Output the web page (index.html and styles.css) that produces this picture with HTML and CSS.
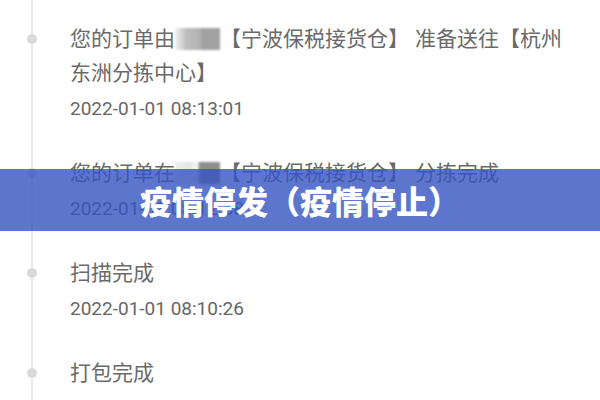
FILE: index.html
```html
<!DOCTYPE html>
<html lang="zh-CN">
<head>
<meta charset="utf-8">
<title>物流详情</title>
<link rel="stylesheet" href="styles.css">
</head>
<body>
<div class="page">
  <ul class="timeline">
    <li class="step">
      <p class="title">您的订单由<span class="mask mask-a"></span>【宁波保税接货仓】<span class="gap"></span>准备送往【杭州东洲分拣中心】</p>
      <p class="time">2022-01-01 08:13:01</p>
    </li>
    <li class="step">
      <p class="title">您的订单在<span class="mask mask-b"></span>【宁波保税接货仓】<span class="gap"></span>分拣完成</p>
      <p class="time">2022-01-01 08:12:58</p>
    </li>
    <li class="step">
      <p class="title">扫描完成</p>
      <p class="time">2022-01-01 08:10:26</p>
    </li>
    <li class="step">
      <p class="title">打包完成</p>
    </li>
  </ul>
  <div class="banner">疫情停发（疫情停止）</div>
</div>
</body>
</html>
```

FILE: styles.css
```css
html, body {
  margin: 0;
  padding: 0;
  background: #ffffff;
}

.page {
  position: relative;
  width: 600px;
  height: 400px;
  overflow: hidden;
  font-family: Roboto, "Noto Sans CJK SC", sans-serif;
  color: #6a6a6a;
}

/* timeline rail */
.timeline {
  list-style: none;
  margin: 0 0 0 31px;
  padding: 22px 0 0 0;
  height: 100%;
  box-sizing: border-box;
  border-left: 2px solid #ebebeb;
  display: flex;
  flex-direction: column;
  gap: 30px;
}

.step {
  position: relative;
  padding-left: 37px;
  width: 500px;
}

/* rail dot */
.step::before {
  content: "";
  position: absolute;
  left: -6px;
  top: 12px;
  width: 10px;
  height: 10px;
  border-radius: 50%;
  background: #d9d9d9;
}

.title {
  margin: 0;
  font-size: 21px;
  line-height: 34px;
}

.time {
  margin: 2px 0 0 0;
  font-size: 19px;
  line-height: 34px;
  color: #666666;
}

.gap {
  display: inline-block;
  width: 6px;
}

/* blurred redaction block */
.mask {
  display: inline-block;
  width: 45px;
  height: 22px;
  vertical-align: -4px;
  filter: blur(1px);
}

.mask-a {
  background: linear-gradient(90deg, #f2f2f2 0%, #bdbdbd 25%, #b3b3b3 55%, #a2a2a2 60%, #a2a2a2 100%);
}

.mask-b {
  background: linear-gradient(90deg, #eeeeee 0%, #e6e6e6 35%, #f4f4f4 45%, #f4f4f4 50%, #8e8e8e 55%, #8e8e8e 100%);
}

/* overlay banner */
.banner {
  position: absolute;
  left: 0;
  right: 0;
  top: 169px;
  height: 62px;
  background: rgba(52, 84, 192, 0.8);
  color: #ffffff;
  font-family: "Noto Sans CJK SC", sans-serif;
  font-weight: 900;
  font-size: 32px;
  line-height: 62px;
  text-align: center;
}
```
